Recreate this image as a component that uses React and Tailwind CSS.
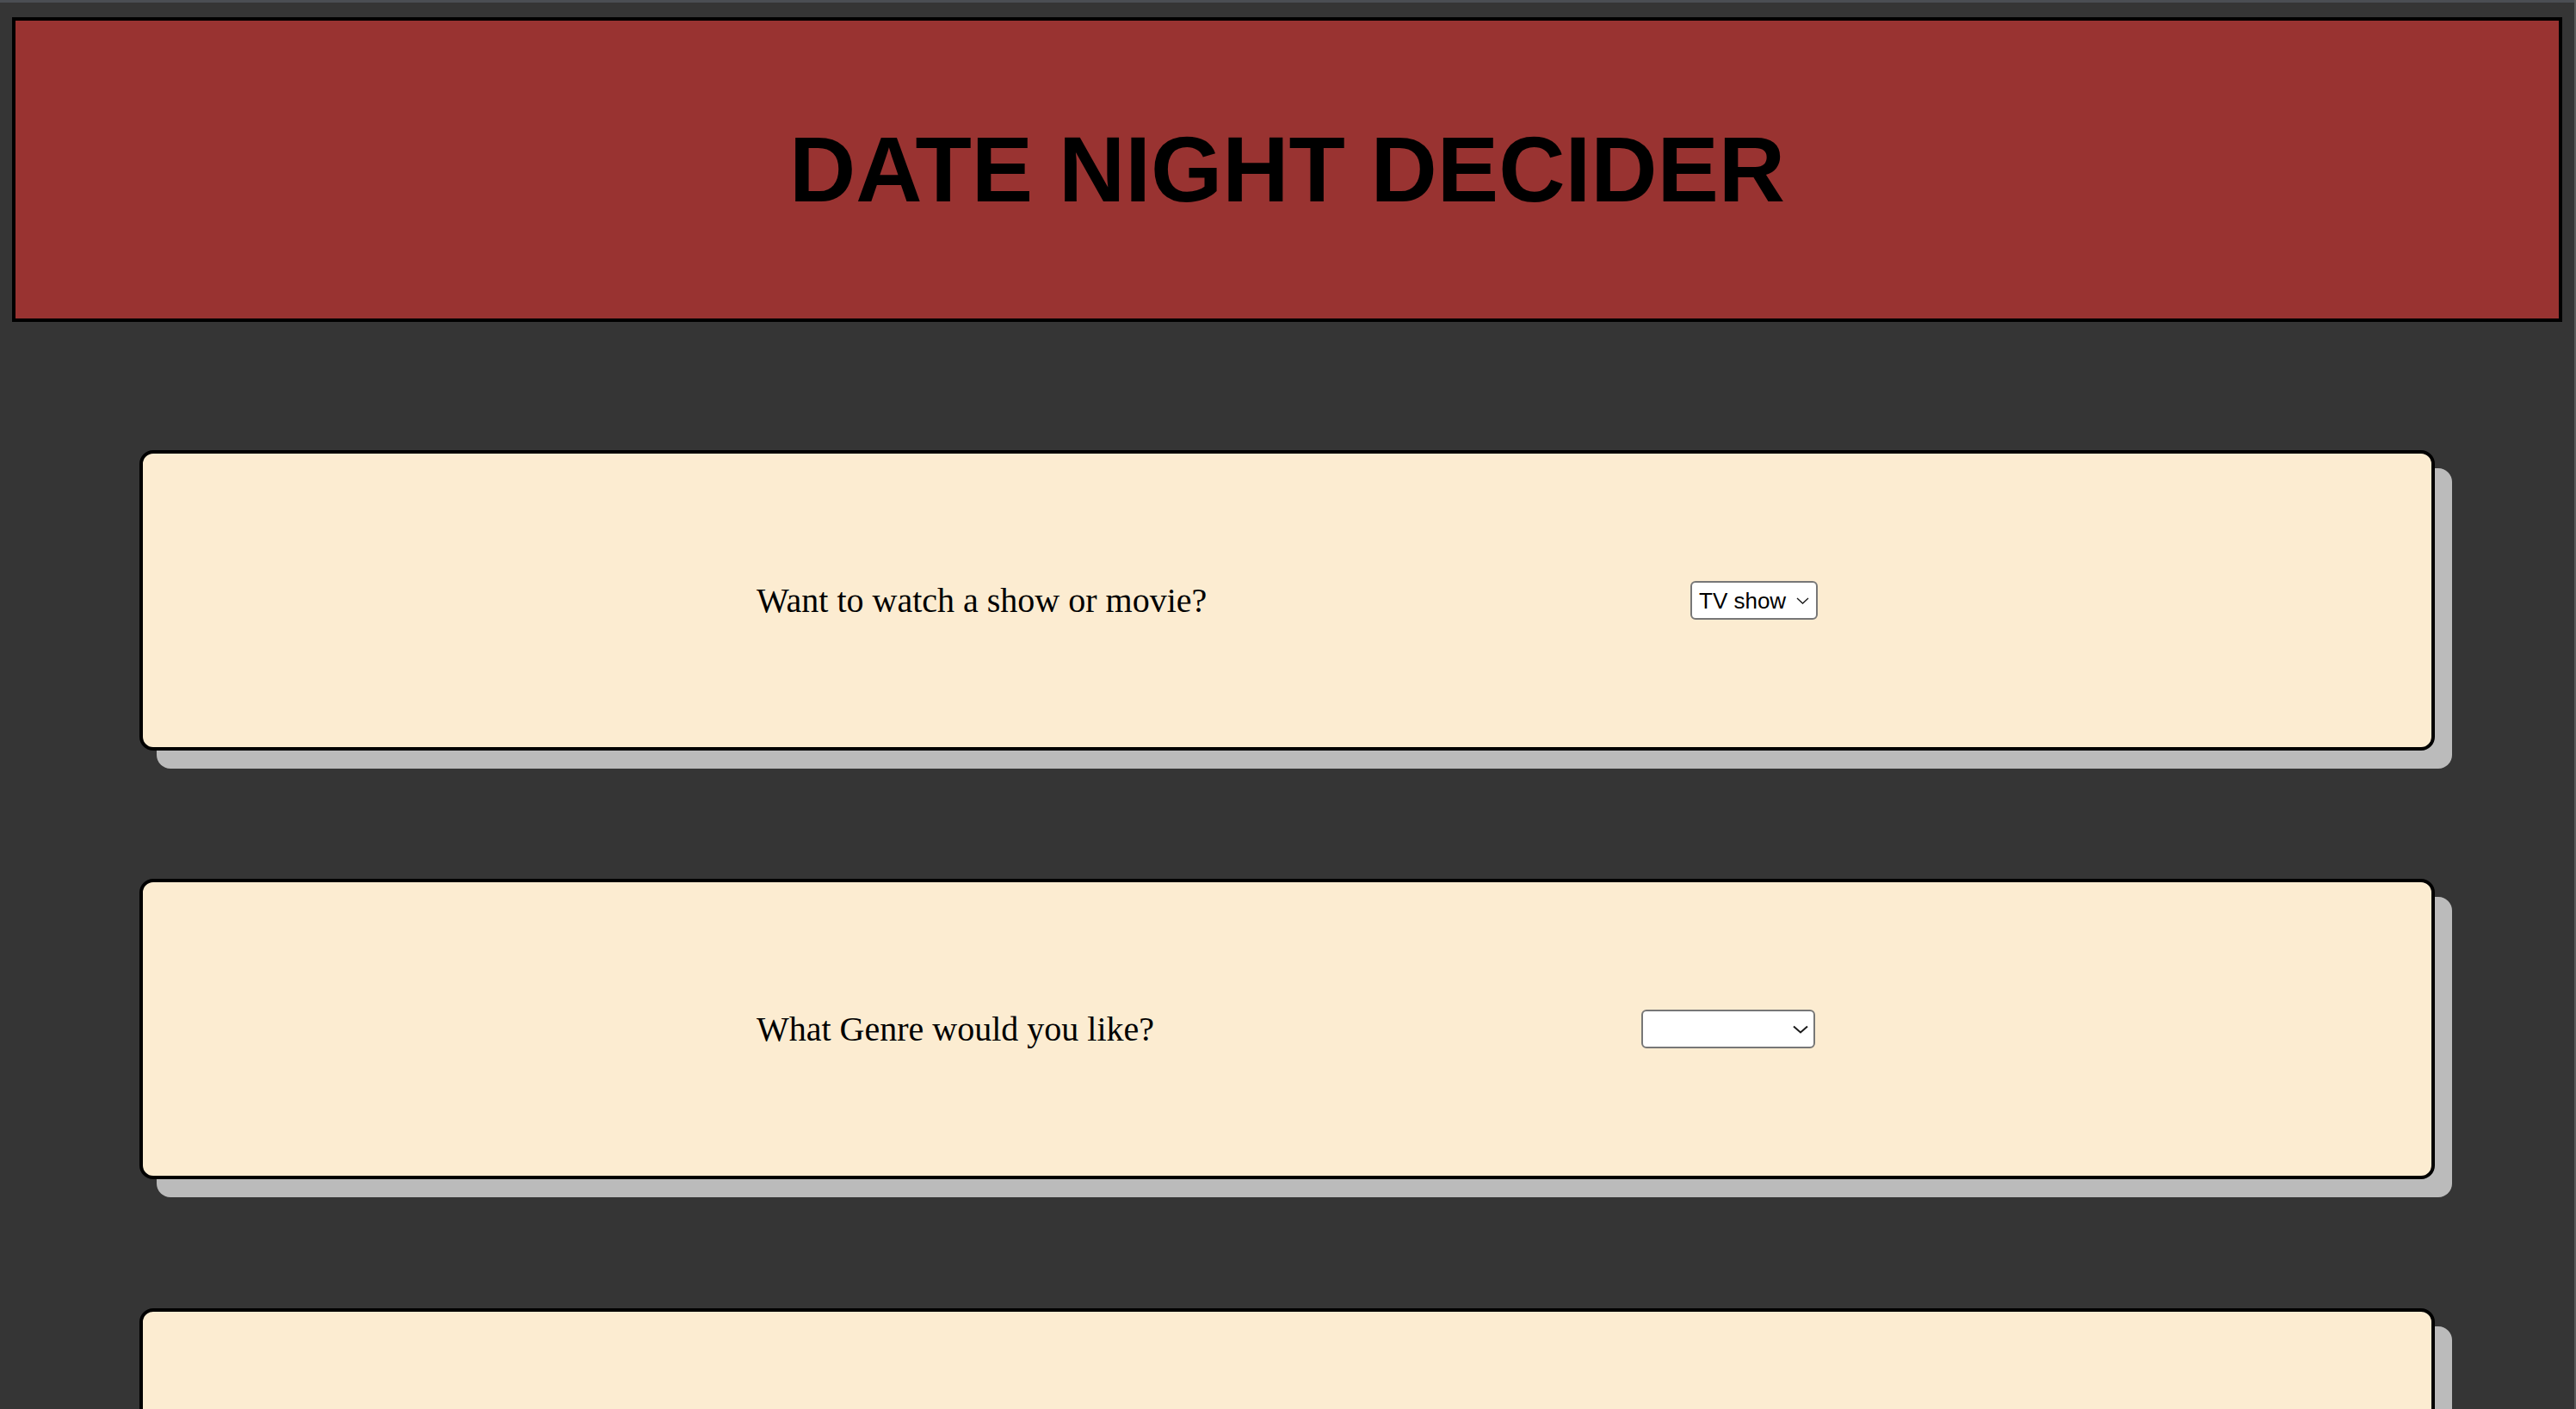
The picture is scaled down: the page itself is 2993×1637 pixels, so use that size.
import { useState } from "react";

const questions = [
  {
    id: "type",
    label: "Want to watch a show or movie?",
    width: "w-[148px]",
    options: ["TV show", "Movie"],
    big: false,
  },
  {
    id: "genre",
    label: "What Genre would you like?",
    width: "w-[202px] mr-[3px]",
    options: ["", "Comedy", "Drama", "Horror", "Romance", "Action"],
    big: true,
  },
];

const Chevron = ({ big }) =>
  big ? (
    <svg
      className="pointer-events-none absolute right-[8px] top-1/2 -translate-y-1/2"
      width="18"
      height="10"
      viewBox="0 0 18 10"
      fill="none"
    >
      <path d="M1 1.5l8 7 8-7" stroke="#1a1a1a" strokeWidth="2" />
    </svg>
  ) : (
    <svg
      className="pointer-events-none absolute right-[10px] top-1/2 -translate-y-1/2"
      width="15"
      height="8"
      viewBox="0 0 15 8"
      fill="none"
    >
      <path d="M1 1l6.5 6L14 1" stroke="#1a1a1a" strokeWidth="1.4" />
    </svg>
  );

const QuestionCard = ({ question, value, onChange }) => (
  <div className="mx-[148px] mt-[149px] h-[349px] rounded-[16px] border-4 border-black bg-[#fcecd1] shadow-[20px_21px_0_0_#bbbbbb] flex items-center">
    <div className="mx-auto w-[1233px] flex items-center justify-between">
      <label
        htmlFor={question.id}
        className="text-[40px] text-black font-['Liberation_Serif',serif]"
      >
        {question.label}
      </label>
      <div className={`relative ${question.width}`}>
        <select
          id={question.id}
          value={value}
          onChange={(e) => onChange(e.target.value)}
          className="appearance-none w-full h-[45px] rounded-[6px] border-2 border-[#777777] bg-white pl-[8px] pr-[30px] text-[26px] leading-none text-black font-['Liberation_Sans',Arial,sans-serif] outline-none"
        >
          {question.options.map((opt) => (
            <option key={opt} value={opt}>
              {opt}
            </option>
          ))}
        </select>
        <Chevron big={question.big} />
      </div>
    </div>
  </div>
);

const App = () => {
  const [answers, setAnswers] = useState({ type: "TV show", genre: "" });

  return (
    <div className="min-h-screen bg-[#353535] flex">
      <div className="flex-1 flex flex-col">
        <div className="h-[3px] bg-[#4b4e53]"></div>
        <div className="px-[14px] pt-[17px] pb-[200px]">
          <div className="h-[354px] border-4 border-black bg-[#993331] flex items-center justify-center">
            <h1 className="text-[107px] leading-none font-bold text-black font-['Liberation_Sans',Arial,sans-serif]">
              DATE NIGHT DECIDER
            </h1>
          </div>

          {questions.map((q) => (
            <QuestionCard
              key={q.id}
              question={q}
              value={answers[q.id]}
              onChange={(v) => setAnswers({ ...answers, [q.id]: v })}
            />
          ))}

          <div className="mx-[148px] mt-[150px] h-[349px] rounded-[16px] border-4 border-black bg-[#fcecd1] shadow-[20px_21px_0_0_#bbbbbb]"></div>
        </div>
      </div>
      <div className="w-[2px] bg-[#5a5a5a]"></div>
    </div>
  );
};

export default App;
